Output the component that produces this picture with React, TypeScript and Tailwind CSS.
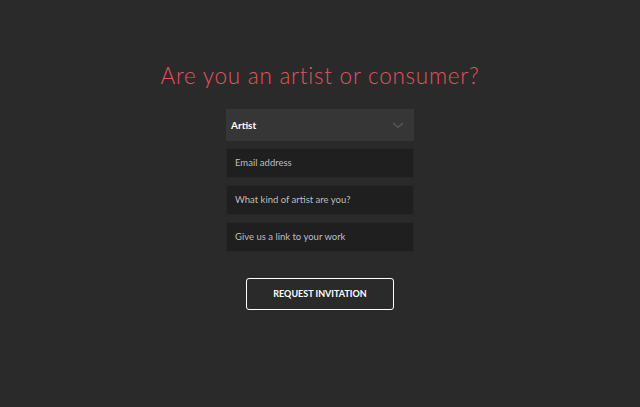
import React from 'react';

const fields = ['Email address', 'What kind of artist are you?', 'Give us a link to your work'];

export default function App() {
    return (
        <div className="w-full h-[407px] bg-[#2a2a2a] flex flex-col items-center font-['Lato',sans-serif]">
            <h1 className="mt-[61px] text-[22.5px] leading-[30px] font-light tracking-[0.75px] text-[#e4525c]">
                Are you an artist or consumer?
            </h1>

            <form className="mt-[18px] w-[188px] flex flex-col gap-[7px]">
                <div className="h-[32px] bg-[#363636] flex items-center justify-between pl-[5px] pr-[10px]">
                    <span className="text-[10px] font-bold text-white">Artist</span>
                    <svg width="12" height="7" viewBox="0 0 12 7" fill="none">
                        <path d="M1 1l5 4.5L11 1" stroke="#5a5a5a" strokeWidth="1.2" />
                    </svg>
                </div>
                {fields.map((f) => (
                    <div key={f} className="h-[30px] bg-[#1f1f1f] border border-[#262626] flex items-center px-[8px]">
                        <span className="text-[9.5px] text-[#bdbdbd]">{f}</span>
                    </div>
                ))}
            </form>

            <button className="mt-[26px] w-[148px] h-[32px] border-[1.5px] border-white rounded-[3px] text-[9px] font-bold text-white">
                REQUEST INVITATION
            </button>
        </div>
    );
}
